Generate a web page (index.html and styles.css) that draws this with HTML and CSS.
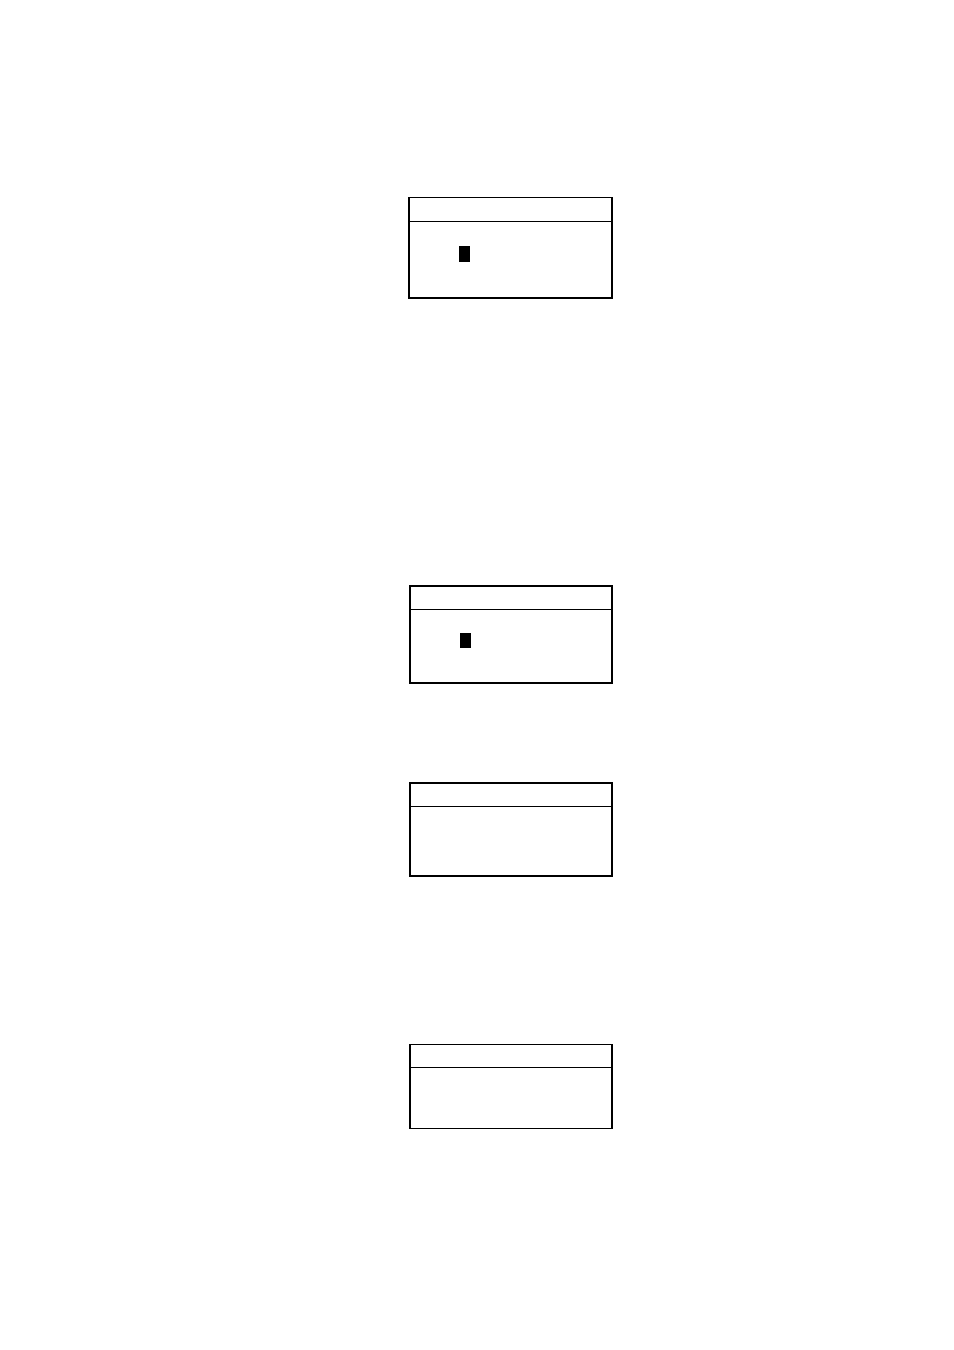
FILE: index.html
```html
<!DOCTYPE html>
<html lang="en">
<head>
<meta charset="utf-8">
<meta name="viewport" content="width=device-width, initial-scale=1">
<title>Display screens</title>
<link rel="stylesheet" href="styles.css">
</head>
<body>
<main class="page">
  <div class="screens">
    <section class="screen screen-first">
      <header class="screen-title"></header>
      <div class="screen-body"><span class="cursor"></span></div>
    </section>
    <section class="screen screen-second">
      <header class="screen-title"></header>
      <div class="screen-body"><span class="cursor"></span></div>
    </section>
    <section class="screen screen-third">
      <header class="screen-title"></header>
      <div class="screen-body"></div>
    </section>
    <section class="screen screen-fourth">
      <header class="screen-title"></header>
      <div class="screen-body"></div>
    </section>
  </div>
</main>
</body>
</html>
```

FILE: styles.css
```css
* {
  box-sizing: border-box;
}

body {
  margin: 0;
  background: #fff;
  color: #000;
  font-family: "Liberation Sans", Arial, sans-serif;
}

.page {
  display: flex;
  justify-content: center;
  min-height: 100vh;
  padding: 197px 0 0 67px;
}

.screens {
  display: flex;
  flex-direction: column;
  align-items: flex-end;
  flex: 0 1 205px;
}

.screen {
  width: 100%;
  max-width: 204px;
  border: 2px solid #000;
}

.screen-title {
  min-height: 23px;
  border-bottom: 1px solid #000;
}

.screen-body {
  min-height: 68px;
  padding: 23px 49px 0;
}

.cursor {
  display: block;
  width: 11px;
  height: 15px;
  background: #000;
}

.screen-first {
  max-width: 205px;
  border-top-width: 1px;
  margin-bottom: 286px;
}

.screen-first .screen-title {
  min-height: 24px;
}

.screen-first .screen-body {
  min-height: 75px;
  padding-top: 24px;
}

.screen-first .cursor {
  height: 16px;
}

.screen-second {
  margin-bottom: 98px;
}

.screen-second .screen-body {
  min-height: 72px;
}

.screen-third {
  margin-bottom: 167px;
}

.screen-fourth {
  border-top-width: 1px;
  border-bottom-width: 1px;
}

.screen-fourth .screen-body {
  min-height: 60px;
}
```
